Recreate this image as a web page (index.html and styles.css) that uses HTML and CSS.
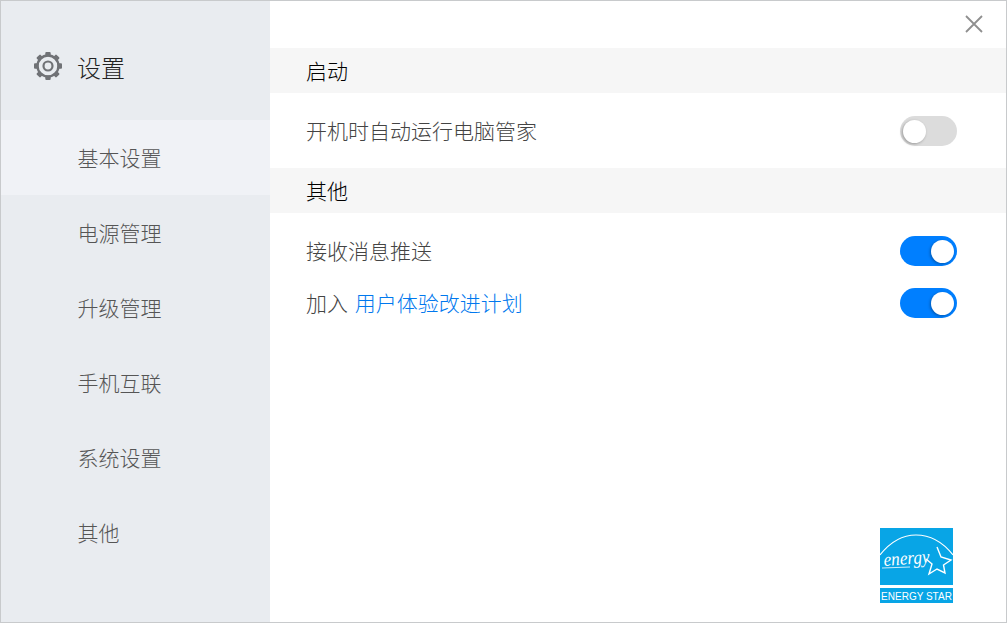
FILE: index.html
```html
<!DOCTYPE html>
<html lang="zh-CN">
<head>
    <meta charset="UTF-8">
    <meta name="viewport" content="width=device-width, initial-scale=1.0">
    <title>设置</title>
    <link rel="stylesheet" href="styles.css">
</head>
<body>
    <div class="window">
        <aside class="sidebar">
            <div class="sidebar-head">
                <svg class="gear" width="28" height="28" viewBox="0 0 28 28">
                    <circle cx="14" cy="14" r="10.500" fill="none" stroke="#707276" stroke-width="2.400"/>
                    <circle cx="14" cy="14" r="4.500" fill="none" stroke="#707276" stroke-width="2.200"/>
                    <g fill="#707276">
                        <rect x="11.300" y="0" width="5.400" height="4.500" rx="1"/>
                        <rect x="11.300" y="23.500" width="5.400" height="4.500" rx="1"/>
                        <rect x="0" y="11.300" width="4.500" height="5.400" rx="1"/>
                        <rect x="23.500" y="11.300" width="4.500" height="5.400" rx="1"/>
                        <rect x="11.300" y="0" width="5.400" height="4.500" rx="1" transform="rotate(45 14 14)"/>
                        <rect x="11.300" y="23.500" width="5.400" height="4.500" rx="1" transform="rotate(45 14 14)"/>
                        <rect x="0" y="11.300" width="4.500" height="5.400" rx="1" transform="rotate(45 14 14)"/>
                        <rect x="23.500" y="11.300" width="4.500" height="5.400" rx="1" transform="rotate(45 14 14)"/>
                    </g>
                </svg>
                <span class="sidebar-title">设置</span>
            </div>
            <nav class="nav">
                <div class="nav-item active">基本设置</div>
                <div class="nav-item">电源管理</div>
                <div class="nav-item">升级管理</div>
                <div class="nav-item">手机互联</div>
                <div class="nav-item">系统设置</div>
                <div class="nav-item">其他</div>
            </nav>
        </aside>

        <main class="content">
            <div class="topbar">
                <svg class="close" width="18" height="18" viewBox="0 0 18 18">
                    <path d="M1 1L17 17M17 1L1 17" stroke="#8f8f8f" stroke-width="1.800" fill="none"/>
                </svg>
            </div>

            <div class="section-title">启动</div>
            <div class="rows rows-single">
                <div class="row">
                    <span class="label">开机时自动运行电脑管家</span>
                    <div class="switch"><div class="knob"></div></div>
                </div>
            </div>

            <div class="section-title">其他</div>
            <div class="rows">
                <div class="row">
                    <span class="label">接收消息推送</span>
                    <div class="switch on"><div class="knob"></div></div>
                </div>
                <div class="row">
                    <span class="label">加入 <a class="link">用户体验改进计划</a></span>
                    <div class="switch on"><div class="knob"></div></div>
                </div>
            </div>

            <div class="footer">
                <svg class="energy" width="73" height="75" viewBox="0 0 73 75">
                    <rect x="0" y="0" width="73" height="57" fill="#08a5e6"/>
                    <rect x="0" y="60" width="73" height="15" fill="#08a5e6"/>
                    <path d="M0 27C11 13 23 7 36 7C49 7 62 13 73 27" fill="none" stroke="#fff" stroke-width="1.200"/>
                    <path d="M2 40L30 39" fill="none" stroke="#fff" stroke-width="0.800"/>
                    <path d="M57 19L61 29L71 32L63.500 37L65 45L57 41L49 46L52 36L46 31" fill="#08a5e6" stroke="#fff" stroke-width="1.400"/>
                    <text class="energy-script" x="4" y="38" textLength="46" lengthAdjust="spacingAndGlyphs" transform="rotate(-4 4 38)">energy</text>
                    <text class="energy-label" x="36.500" y="71.500" text-anchor="middle">ENERGY STAR</text>
                </svg>
            </div>
        </main>
    </div>
</body>
</html>
```

FILE: styles.css
```css
* {
    box-sizing: border-box;
}

html, body {
    margin: 0;
    height: 100%;
}

body {
    background-color: #fff;
    font-family: "Noto Sans CJK SC", "Liberation Sans", sans-serif;
    font-weight: 300;
}

.window {
    display: flex;
    width: 1007px;
    height: 623px;
    border: 1px solid #c8cacc;
    background-color: #fff;
    overflow: hidden;
}

.sidebar {
    flex: none;
    width: 269px;
    background-color: #e9ecf0;
}

.sidebar-head {
    display: flex;
    align-items: center;
    height: 119px;
    padding: 11px 0 0 33px;
}

.gear {
    flex: none;
}

.sidebar-title {
    margin-left: 15px;
    font-size: 24px;
    color: #222;
}

.nav-item {
    display: flex;
    align-items: center;
    height: 75px;
    padding: 0 0 2px 76.500px;
    font-size: 21px;
    color: #555;
}

.nav-item.active {
    background-color: #f0f2f6;
}

.content {
    flex: 1;
    display: flex;
    flex-direction: column;
    min-width: 0;
}

.topbar {
    display: flex;
    justify-content: flex-end;
    align-items: flex-start;
    height: 47px;
    padding: 14px 23px 0 0;
}

.section-title {
    display: flex;
    align-items: center;
    height: 45px;
    padding: 0 0 2px 36px;
    background-color: #f6f6f6;
    font-size: 21px;
    color: #000;
}

.rows {
    padding: 12px 49px 0 36px;
}

.rows-single {
    height: 75px;
    padding-top: 11px;
}

.row {
    display: flex;
    justify-content: space-between;
    align-items: center;
    height: 52px;
    font-size: 21px;
    color: #444;
}

.label {
    position: relative;
    top: -1px;
}

.rows-single .row {
    height: 56px;
    margin-top: -1px;
}

.link {
    margin-left: 2px;
    color: #0078ee;
}

.switch {
    display: flex;
    align-items: center;
    width: 57px;
    height: 30px;
    padding: 0 3px;
    border-radius: 15px;
    background-color: #dcdcdc;
}

.switch.on {
    justify-content: flex-end;
    background-color: #007fff;
}

.knob {
    width: 23px;
    height: 23px;
    border-radius: 50%;
    background-color: #fff;
    box-shadow: -1px 1px 3px rgba(0, 0, 0, 0.3);
}

.footer {
    flex: 1;
    display: flex;
    justify-content: flex-end;
    align-items: flex-end;
    padding: 0 53px 19px 0;
}

.energy-script {
    font-family: "Liberation Serif", serif;
    font-style: italic;
    font-size: 19px;
    fill: #fff;
}

.energy-label {
    font-family: "Liberation Sans", sans-serif;
    font-size: 10px;
    fill: #fff;
}
```
